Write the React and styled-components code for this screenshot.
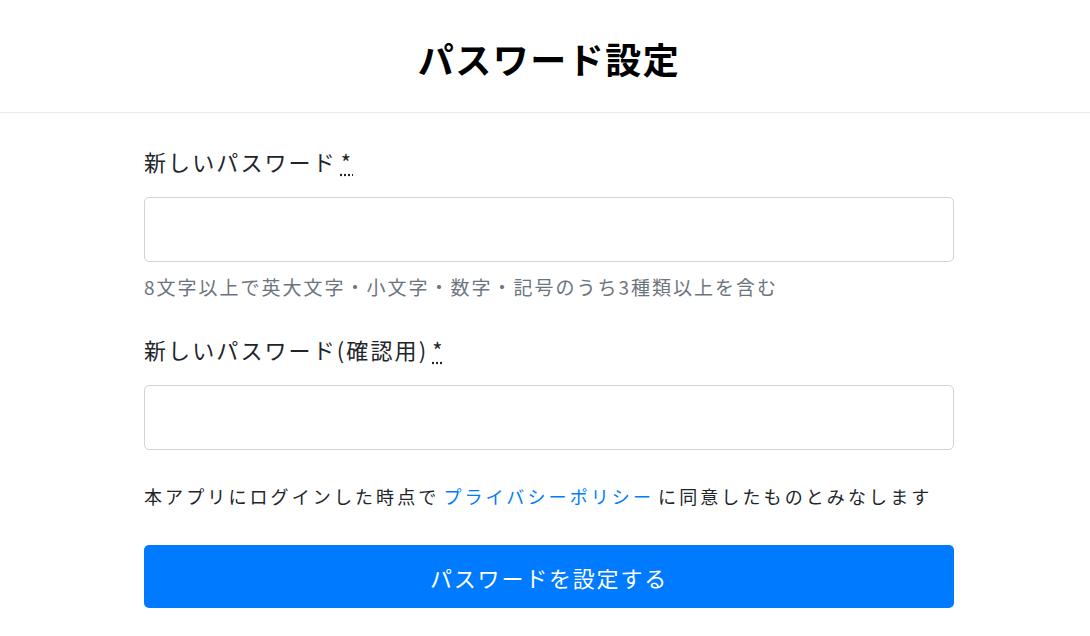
import React from "react";
import styled, { createGlobalStyle } from "styled-components";

const Global = createGlobalStyle`
  html, body { margin: 0; padding: 0; background: #fff; }
  body {
    font-family: "Noto Sans CJK JP", "Noto Sans", sans-serif;
    color: #212529;
  }
  * { box-sizing: border-box; }
`;

const Page = styled.div`
  padding-left: 8px;
`;

const Header = styled.header`
  height: 113px;
  display: flex;
  align-items: center;
  justify-content: center;
  border-bottom: 1px solid #e9e9e9;
  margin-left: -8px;
  padding-left: 8px;
  padding-top: 3px;
`;

const Title = styled.h1`
  margin: 0;
  font-size: 36px;
  font-weight: 700;
  letter-spacing: 1.5px;
  line-height: 1;
  color: #000;
`;

const Form = styled.form`
  width: 810px;
  margin: 0 auto;
  padding-top: 32px;
  display: flex;
  flex-direction: column;
`;

const Field = styled.div`
  display: flex;
  flex-direction: column;
  margin-bottom: ${(p) => p.$gap || 0}px;
`;

const Label = styled.label`
  font-size: 22px;
  letter-spacing: 2.1px;
  line-height: 32px;
  margin-bottom: 20px;
  color: #212529;
`;

const Req = styled.abbr`
  text-decoration: underline dotted;
  text-underline-offset: 3px;
  cursor: help;
  margin-left: 4px;
`;

const Input = styled.input`
  height: 65px;
  width: 100%;
  border: 1px solid #ced4da;
  border-radius: 5px;
  padding: 0 16px;
  font-size: 20px;
  outline: none;
`;

const Hint = styled.small`
  font-size: 19px;
  letter-spacing: 2px;
  line-height: 28px;
  color: #6c757d;
  margin-top: 11px;
`;

const Consent = styled.p`
  margin: 0 0 35px;
  font-size: 18px;
  letter-spacing: 3.1px;
  line-height: 28px;
`;

const Link = styled.a`
  color: #007bff;
  text-decoration: none;
  margin: 0 4px;
`;

const Button = styled.button`
  height: 63px;
  width: 100%;
  border: none;
  border-radius: 5px;
  background: #007bff;
  color: #fff;
  font-family: inherit;
  font-size: 22px;
  letter-spacing: 1.8px;
  cursor: pointer;
`;

export default function App() {
  return (
    <Page>
      <Global />
      <Header>
        <Title>パスワード設定</Title>
      </Header>
      <Form onSubmit={(e) => e.preventDefault()}>
        <Field $gap={32}>
          <Label htmlFor="pw">
            新しいパスワード<Req title="required">*</Req>
          </Label>
          <Input id="pw" type="password" />
          <Hint>8文字以上で英大文字・小文字・数字・記号のうち3種類以上を含む</Hint>
        </Field>
        <Field $gap={32}>
          <Label htmlFor="pw2">
            新しいパスワード(確認用)<Req title="required">*</Req>
          </Label>
          <Input id="pw2" type="password" />
        </Field>
        <Consent>
          本アプリにログインした時点で<Link href="#">プライバシーポリシー</Link>に同意したものとみなします
        </Consent>
        <Button type="submit">パスワードを設定する</Button>
      </Form>
    </Page>
  );
}
